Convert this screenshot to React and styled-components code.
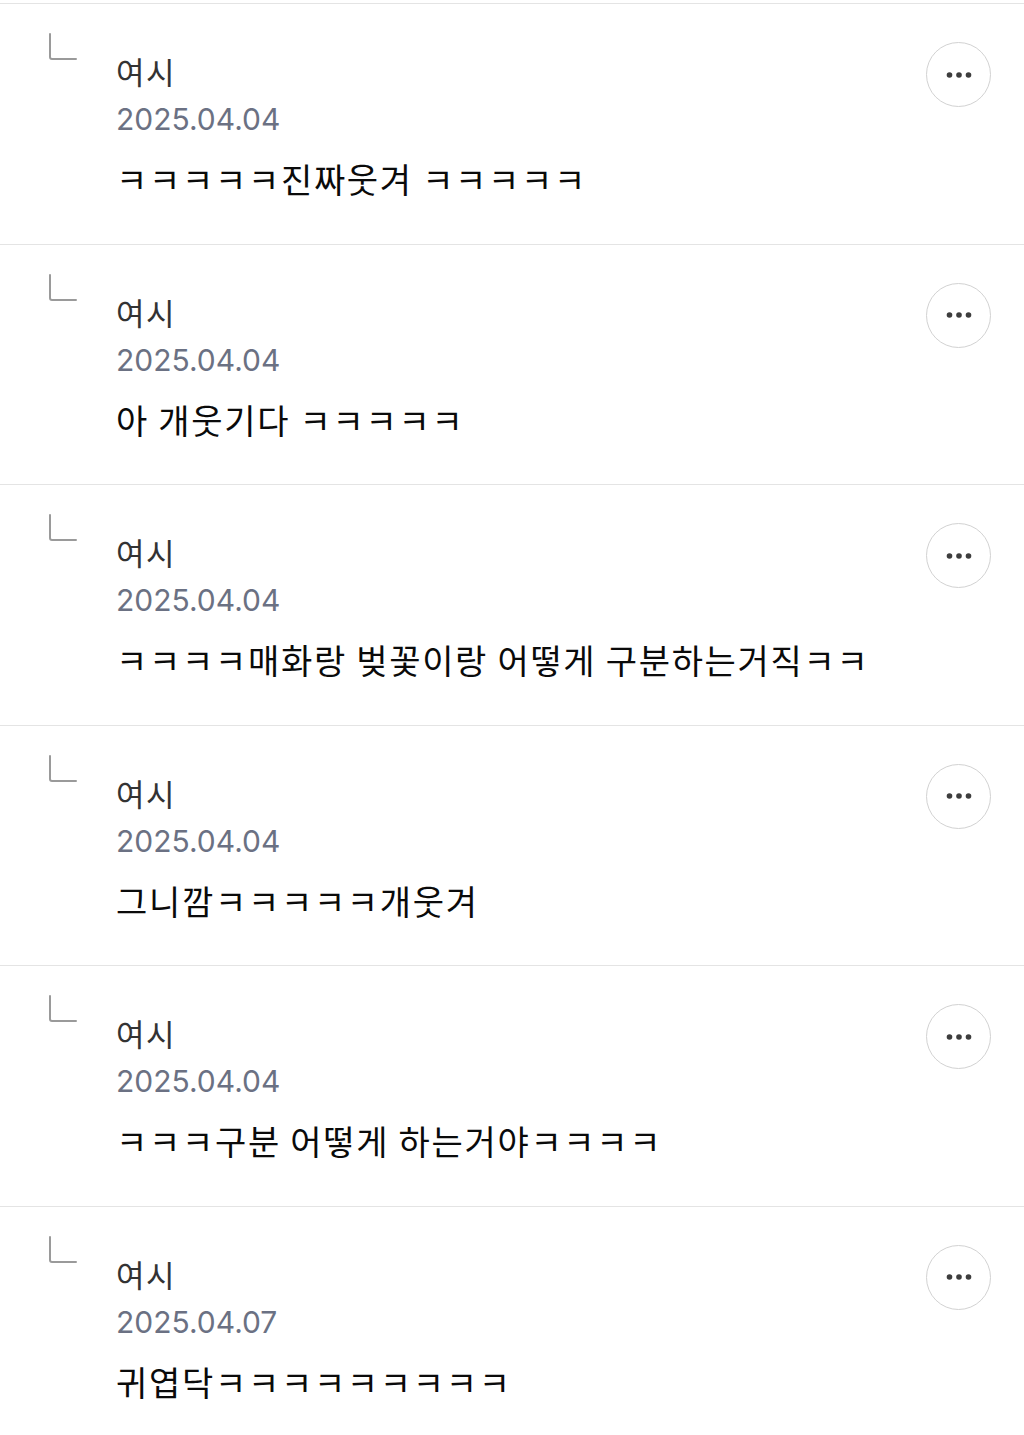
import React from "react";
import styled, { createGlobalStyle } from "styled-components";

const comments = [
  { id: 1, name: "여시", date: "2025.04.04", text: "ㅋㅋㅋㅋㅋ진짜웃겨 ㅋㅋㅋㅋㅋ" },
  { id: 2, name: "여시", date: "2025.04.04", text: "아 개웃기다 ㅋㅋㅋㅋㅋ" },
  { id: 3, name: "여시", date: "2025.04.04", text: "ㅋㅋㅋㅋ매화랑 벚꽃이랑 어떻게 구분하는거직ㅋㅋ" },
  { id: 4, name: "여시", date: "2025.04.04", text: "그니깜ㅋㅋㅋㅋㅋ개웃겨" },
  { id: 5, name: "여시", date: "2025.04.04", text: "ㅋㅋㅋ구분 어떻게 하는거야ㅋㅋㅋㅋ" },
  { id: 6, name: "여시", date: "2025.04.07", text: "귀엽닥ㅋㅋㅋㅋㅋㅋㅋㅋㅋ" },
];

const GlobalStyle = createGlobalStyle`
  * { box-sizing: border-box; }
  body {
    margin: 0;
    padding-top: 3px;
    background: #fff;
    font-family: "Noto Sans CJK KR", "Noto Sans", sans-serif;
  }
`;

const ReplyIcon = () => (
  <svg width="30" height="30" viewBox="0 0 30 30" fill="none">
    <path
      d="M2 1 V24 Q2 26 4 26 H28"
      stroke="#9a9a9a"
      strokeWidth="2"
      strokeLinecap="round"
    />
  </svg>
);

const Dots = () => (
  <svg width="30" height="8" viewBox="0 0 30 8">
    <circle cx="5.5" cy="4" r="2.8" fill="#3d3d3d" />
    <circle cx="15" cy="4" r="2.8" fill="#3d3d3d" />
    <circle cx="24.5" cy="4" r="2.8" fill="#3d3d3d" />
  </svg>
);

const CommentReplies = () => {
  return (
    <List>
      {comments.map((c) => (
        <Row key={c.id}>
          <Corner>
            <ReplyIcon />
          </Corner>
          <Body>
            <Name>{c.name}</Name>
            <DateText>{c.date}</DateText>
            <Content>{c.text}</Content>
          </Body>
          <MoreButton aria-label="more">
            <Dots />
          </MoreButton>
        </Row>
      ))}
    </List>
  );
};

const List = styled.div`
  display: flex;
  flex-direction: column;
`;

const Row = styled.div`
  display: flex;
  align-items: flex-start;
  height: 240.5px;
  border-top: 1px solid #e4e4e4;
  padding: 0 33px 0 48px;
`;

const Corner = styled.div`
  margin-top: 29px;
  width: 30px;
  height: 30px;
  flex-shrink: 0;
`;

const Body = styled.div`
  flex: 1;
  margin-left: 38px;
  margin-top: 47px;
  display: flex;
  flex-direction: column;
`;

const Name = styled.div`
  font-size: 31px;
  line-height: 40px;
  letter-spacing: 1.5px;
  color: #333;
`;

const DateText = styled.div`
  margin-top: 8px;
  font-family: Inter, "Noto Sans", sans-serif;
  font-size: 30px;
  line-height: 40px;
  color: #6b7183;
`;

const Content = styled.div`
  margin-top: 18px;
  font-size: 34px;
  line-height: 44px;
  letter-spacing: 1.7px;
  color: #0a0a0a;
  white-space: nowrap;
`;

const MoreButton = styled.button`
  margin-top: 38px;
  width: 65px;
  height: 65px;
  flex-shrink: 0;
  border-radius: 50%;
  border: 1.5px solid #d2d2d2;
  background: #fff;
  padding: 0;
  display: flex;
  align-items: center;
  justify-content: center;
`;

export default function App() {
  return (
    <>
      <GlobalStyle />
      <CommentReplies />
    </>
  );
}
